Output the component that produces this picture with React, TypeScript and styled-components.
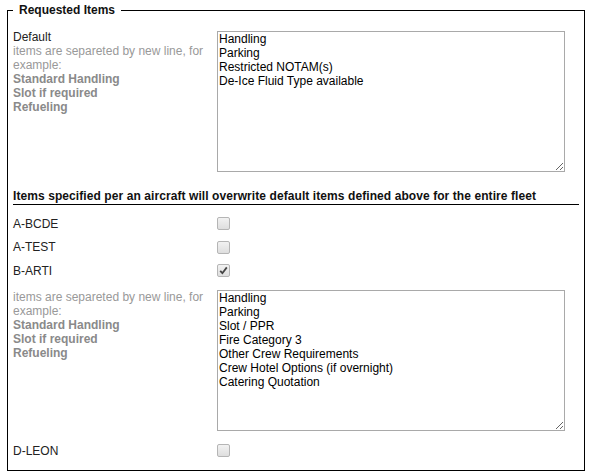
import React from "react";
import styled, { createGlobalStyle } from "styled-components";

const GlobalStyle = createGlobalStyle`
  html, body {
    margin: 0;
    padding: 0;
    background: #ffffff;
  }
  body {
    font-family: "Liberation Sans", Arial, sans-serif;
    font-size: 12px;
    color: #222222;
  }
`;

const Page = styled.div`
  width: 591px;
  height: 475px;
  padding: 2px 0 0 7px;
  box-sizing: border-box;
`;

const Fieldset = styled.fieldset`
  width: 578px;
  height: 469px;
  box-sizing: border-box;
  margin: 0;
  padding: 12px 5px 0 5px;
  border: 1px solid #000000;
  min-width: 0;
`;

const Legend = styled.legend`
  padding: 0 6px;
  font-size: 12px;
  line-height: 16px;
  font-weight: bold;
  color: #111111;
`;

const Row = styled.div<{ $top?: number; $height?: number }>`
  display: grid;
  grid-template-columns: 204px 348px;
  align-items: ${(p) => (p.$height ? "center" : "start")};
  margin-top: ${(p) => p.$top ?? 0}px;
  height: ${(p) => (p.$height ? `${p.$height}px` : "auto")};
`;

const Label = styled.div`
  line-height: 14px;
  padding-right: 6px;
  color: #222222;
`;

const Hint = styled.div`
  color: #999999;
`;

const Example = styled.div`
  color: #8a8a8a;
  font-weight: bold;
`;

const Area = styled.textarea<{ $top?: number }>`
  width: 348px;
  height: 141px;
  box-sizing: border-box;
  margin: ${(p) => p.$top ?? 0}px 0 0 0;
  padding: 0 1px;
  border: 1px solid #a9a9a9;
  border-radius: 0;
  font-family: "Liberation Sans", Arial, sans-serif;
  font-size: 12px;
  line-height: 14px;
  color: #000000;
  background: #ffffff;
  resize: vertical;
  outline: none;
  overflow: hidden;
  display: block;
`;

const Heading = styled.div`
  margin-top: 17px;
  font-weight: bold;
  line-height: 14px;
  letter-spacing: 0.08px;
  padding-bottom: 1px;
  border-bottom: 1px solid #000000;
  color: #111111;
`;

const Box = styled.span`
  display: inline-flex;
  align-items: center;
  justify-content: center;
  width: 11px;
  height: 11px;
  border: 1px solid #b5b5b5;
  border-radius: 2px;
  background: linear-gradient(#f2f2f2, #dedede);
`;

function Checkbox({ checked }: { checked?: boolean }) {
  return (
    <Box>
      {checked && (
        <svg width="9" height="9" viewBox="0 0 9 9">
          <path
            d="M1.2 4.8 L3.4 7.2 L7.8 1.4"
            fill="none"
            stroke="#444"
            strokeWidth="1.8"
          />
        </svg>
      )}
    </Box>
  );
}

function HintBlock() {
  return (
    <>
      <Hint>items are separeted by new line, for example:</Hint>
      <Example>Standard Handling</Example>
      <Example>Slot if required</Example>
      <Example>Refueling</Example>
    </>
  );
}

const defaultItems = [
  "Handling",
  "Parking",
  "Restricted NOTAM(s)",
  "De-Ice Fluid Type available",
].join("\n");

const artiItems = [
  "Handling",
  "Parking",
  "Slot / PPR",
  "Fire Category 3",
  "Other Crew Requirements",
  "Crew Hotel Options (if overnight)",
  "Catering Quotation",
].join("\n");

export default function App() {
  return (
    <Page>
      <GlobalStyle />
      <Fieldset>
        <Legend>Requested Items</Legend>
        <Row>
          <Label>
            <div>Default</div>
            <HintBlock />
          </Label>
          <Area $top={1} defaultValue={defaultItems} />
        </Row>
        <Heading>
          Items specified per an aircraft will overwrite default items defined
          above for the entire fleet
        </Heading>
        <Row $top={7} $height={23.5}>
          <Label>A-BCDE</Label>
          <Checkbox />
        </Row>
        <Row $height={23.5}>
          <Label>A-TEST</Label>
          <Checkbox />
        </Row>
        <Row $height={23.5}>
          <Label>B-ARTI</Label>
          <Checkbox checked />
        </Row>
        <Row $top={7}>
          <Label>
            <HintBlock />
          </Label>
          <Area defaultValue={artiItems} />
        </Row>
        <Row $top={8} $height={24}>
          <Label>D-LEON</Label>
          <Checkbox />
        </Row>
      </Fieldset>
    </Page>
  );
}
